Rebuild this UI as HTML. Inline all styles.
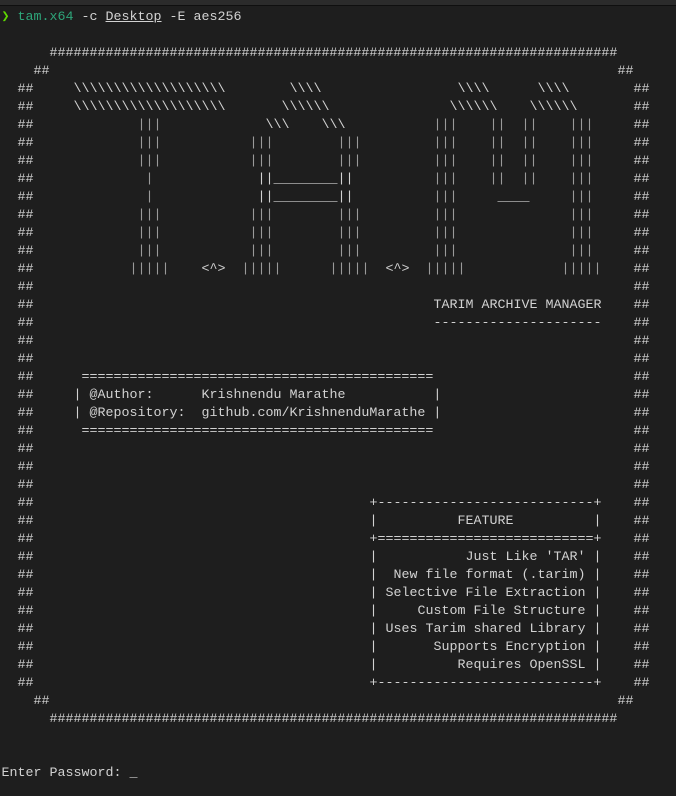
<!DOCTYPE html>
<html><head><meta charset="utf-8"><style>
html,body{margin:0;padding:0;background:#1e1e1e;width:676px;height:796px;overflow:hidden}
.top{position:absolute;left:0;top:0;width:676px;height:5px;background:#2b2b2b;border-bottom:1px solid #0f0f0f}
#t{position:absolute;left:1.5px;top:9px}
#t span{position:absolute;white-space:pre;font-family:"Liberation Mono",monospace;font-size:13.33px;line-height:18px;color:#d2d2d2}
#t span.p{color:#9a9a9a}
.g{color:#5fd700}.c{color:#2ea67a}
</style></head><body><div class="top"></div><div id="t">
<span style="left:0;top:0"><b class="g" style="font-weight:normal">❯</b> <b class="c" style="font-weight:normal">tam.x64</b> -c <u>Desktop</u> -E aes256</span>
<span style="left:48px;top:36px">#######################################################################</span>
<span style="left:32px;top:54px">##</span><span style="left:616px;top:54px">##</span>

<span style="left:16px;top:72px">##</span><span style="left:632px;top:72px">##</span>
<span style="left:16px;top:90px">##</span><span style="left:632px;top:90px">##</span>
<span style="left:16px;top:108px">##</span><span style="left:632px;top:108px">##</span>
<span style="left:16px;top:126px">##</span><span style="left:632px;top:126px">##</span>
<span style="left:16px;top:144px">##</span><span style="left:632px;top:144px">##</span>
<span style="left:16px;top:162px">##</span><span style="left:632px;top:162px">##</span>
<span style="left:16px;top:180px">##</span><span style="left:632px;top:180px">##</span>
<span style="left:16px;top:198px">##</span><span style="left:632px;top:198px">##</span>
<span style="left:16px;top:216px">##</span><span style="left:632px;top:216px">##</span>
<span style="left:16px;top:234px">##</span><span style="left:632px;top:234px">##</span>
<span style="left:16px;top:252px">##</span><span style="left:632px;top:252px">##</span>
<span style="left:16px;top:270px">##</span><span style="left:632px;top:270px">##</span>
<span style="left:16px;top:288px">##</span><span style="left:632px;top:288px">##</span>
<span style="left:16px;top:306px">##</span><span style="left:632px;top:306px">##</span>
<span style="left:16px;top:324px">##</span><span style="left:632px;top:324px">##</span>
<span style="left:16px;top:342px">##</span><span style="left:632px;top:342px">##</span>
<span style="left:16px;top:360px">##</span><span style="left:632px;top:360px">##</span>
<span style="left:16px;top:378px">##</span><span style="left:632px;top:378px">##</span>
<span style="left:16px;top:396px">##</span><span style="left:632px;top:396px">##</span>
<span style="left:16px;top:414px">##</span><span style="left:632px;top:414px">##</span>
<span style="left:16px;top:432px">##</span><span style="left:632px;top:432px">##</span>
<span style="left:16px;top:450px">##</span><span style="left:632px;top:450px">##</span>
<span style="left:16px;top:468px">##</span><span style="left:632px;top:468px">##</span>
<span style="left:16px;top:486px">##</span><span style="left:632px;top:486px">##</span>
<span style="left:16px;top:504px">##</span><span style="left:632px;top:504px">##</span>
<span style="left:16px;top:522px">##</span><span style="left:632px;top:522px">##</span>
<span style="left:16px;top:540px">##</span><span style="left:632px;top:540px">##</span>
<span style="left:16px;top:558px">##</span><span style="left:632px;top:558px">##</span>
<span style="left:16px;top:576px">##</span><span style="left:632px;top:576px">##</span>
<span style="left:16px;top:594px">##</span><span style="left:632px;top:594px">##</span>
<span style="left:16px;top:612px">##</span><span style="left:632px;top:612px">##</span>
<span style="left:16px;top:630px">##</span><span style="left:632px;top:630px">##</span>
<span style="left:16px;top:648px">##</span><span style="left:632px;top:648px">##</span>
<span style="left:16px;top:666px">##</span><span style="left:632px;top:666px">##</span>

<span style="left:72px;top:72px">\\\\\\\\\\\\\\\\\\\</span>
<span style="left:288px;top:72px">\\\\</span>
<span style="left:456px;top:72px">\\\\</span>
<span style="left:536px;top:72px">\\\\</span>

<span style="left:72px;top:90px">\\\\\\\\\\\\\\\\\\\</span>
<span style="left:280px;top:90px">\\\\\\</span>
<span style="left:448px;top:90px">\\\\\\</span>
<span style="left:528px;top:90px">\\\\\\</span>

<span class="p" style="left:136px;top:108px">|||</span>
<span style="left:264px;top:108px">\\\</span>
<span style="left:320px;top:108px">\\\</span>
<span class="p" style="left:432px;top:108px">|||</span>
<span class="p" style="left:488px;top:108px">||</span>
<span class="p" style="left:520px;top:108px">||</span>
<span class="p" style="left:568px;top:108px">|||</span>

<span class="p" style="left:136px;top:126px">|||</span>
<span class="p" style="left:248px;top:126px">|||</span>
<span class="p" style="left:336px;top:126px">|||</span>
<span class="p" style="left:432px;top:126px">|||</span>
<span class="p" style="left:488px;top:126px">||</span>
<span class="p" style="left:520px;top:126px">||</span>
<span class="p" style="left:568px;top:126px">|||</span>

<span class="p" style="left:136px;top:144px">|||</span>
<span class="p" style="left:248px;top:144px">|||</span>
<span class="p" style="left:336px;top:144px">|||</span>
<span class="p" style="left:432px;top:144px">|||</span>
<span class="p" style="left:488px;top:144px">||</span>
<span class="p" style="left:520px;top:144px">||</span>
<span class="p" style="left:568px;top:144px">|||</span>

<span class="p" style="left:144px;top:162px">|</span>
<span style="left:256px;top:162px">||________||</span>
<span class="p" style="left:432px;top:162px">|||</span>
<span class="p" style="left:488px;top:162px">||</span>
<span class="p" style="left:520px;top:162px">||</span>
<span class="p" style="left:568px;top:162px">|||</span>

<span class="p" style="left:144px;top:180px">|</span>
<span style="left:256px;top:180px">||________||</span>
<span class="p" style="left:432px;top:180px">|||</span>
<span style="left:496px;top:180px">____</span>
<span class="p" style="left:568px;top:180px">|||</span>

<span class="p" style="left:136px;top:198px">|||</span>
<span class="p" style="left:248px;top:198px">|||</span>
<span class="p" style="left:336px;top:198px">|||</span>
<span class="p" style="left:432px;top:198px">|||</span>
<span class="p" style="left:568px;top:198px">|||</span>

<span class="p" style="left:136px;top:216px">|||</span>
<span class="p" style="left:248px;top:216px">|||</span>
<span class="p" style="left:336px;top:216px">|||</span>
<span class="p" style="left:432px;top:216px">|||</span>
<span class="p" style="left:568px;top:216px">|||</span>

<span class="p" style="left:136px;top:234px">|||</span>
<span class="p" style="left:248px;top:234px">|||</span>
<span class="p" style="left:336px;top:234px">|||</span>
<span class="p" style="left:432px;top:234px">|||</span>
<span class="p" style="left:568px;top:234px">|||</span>

<span class="p" style="left:128px;top:252px">|||||</span>
<span style="left:200px;top:252px">&lt;^&gt;</span>
<span class="p" style="left:240px;top:252px">|||||</span>
<span class="p" style="left:328px;top:252px">|||||</span>
<span style="left:384px;top:252px">&lt;^&gt;</span>
<span class="p" style="left:424px;top:252px">|||||</span>
<span class="p" style="left:560px;top:252px">|||||</span>

<span style="left:432px;top:288px">TARIM ARCHIVE MANAGER</span>
<span style="left:432px;top:306px">---------------------</span>

<span style="left:80px;top:360px">============================================</span>
<span style="left:72px;top:378px">| @Author:      Krishnendu Marathe           |</span>
<span style="left:72px;top:396px">| @Repository:  github.com/KrishnenduMarathe |</span>
<span style="left:80px;top:414px">============================================</span>

<span style="left:368px;top:486px">+---------------------------+</span>
<span style="left:368px;top:504px">|          FEATURE          |</span>
<span style="left:368px;top:522px">+===========================+</span>
<span style="left:368px;top:540px">|           Just Like 'TAR' |</span>
<span style="left:368px;top:558px">|  New file format (.tarim) |</span>
<span style="left:368px;top:576px">| Selective File Extraction |</span>
<span style="left:368px;top:594px">|     Custom File Structure |</span>
<span style="left:368px;top:612px">| Uses Tarim shared Library |</span>
<span style="left:368px;top:630px">|       Supports Encryption |</span>
<span style="left:368px;top:648px">|          Requires OpenSSL |</span>
<span style="left:368px;top:666px">+---------------------------+</span>

<span style="left:32px;top:684px">##</span><span style="left:616px;top:684px">##</span>
<span style="left:48px;top:702px">#######################################################################</span>
<span style="left:0;top:756px">Enter Password: _</span>
</div></body></html>
